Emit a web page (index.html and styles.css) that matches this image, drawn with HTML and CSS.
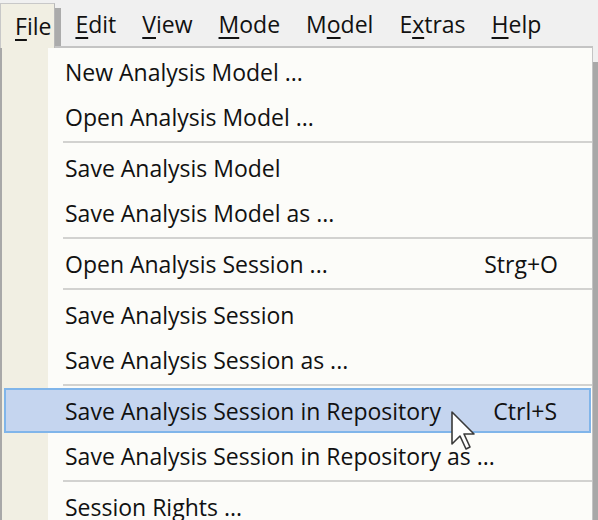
FILE: index.html
```html
<!DOCTYPE html>
<html>
<head>
<meta charset="utf-8">
<link rel="stylesheet" href="styles.css">
</head>
<body>
<div class="menubar">
  <div class="mb-item mb-file"><u>F</u>ile</div>
  <div class="mb-item"><u>E</u>dit</div>
  <div class="mb-item"><u>V</u>iew</div>
  <div class="mb-item"><u>M</u>ode</div>
  <div class="mb-item">M<u>o</u>del</div>
  <div class="mb-item">E<u>x</u>tras</div>
  <div class="mb-item"><u>H</u>elp</div>
</div>
<div class="dropdown">
  <div class="item"><span>New Analysis Model ...</span></div>
  <div class="item"><span>Open Analysis Model ...</span></div>
  <div class="sep"></div>
  <div class="item"><span>Save Analysis Model</span></div>
  <div class="item"><span>Save Analysis Model as ...</span></div>
  <div class="sep"></div>
  <div class="item"><span>Open Analysis Session ...</span><span class="key">Strg+O</span></div>
  <div class="sep"></div>
  <div class="item"><span>Save Analysis Session</span></div>
  <div class="item"><span>Save Analysis Session as ...</span></div>
  <div class="sep"></div>
  <div class="item hover"><span>Save Analysis Session in Repository</span><span class="key">Ctrl+S</span></div>
  <div class="item"><span>Save Analysis Session in Repository as ...</span></div>
  <div class="sep"></div>
  <div class="item"><span>Session Rights ...</span></div>
  <svg class="cursor" width="26" height="42" viewBox="0 0 26 42">
    <path d="M1 1 L1 33 L9 25 L15 38 L19 36 L13 23 L23 23 Z" fill="#fff" stroke="#3a3a3a" stroke-width="1.6" stroke-linejoin="round"/>
  </svg>
</div>
</body>
</html>
```
FILE: styles.css
```css
html, body {
  margin: 0;
  padding: 0;
}
body {
  background: #f0f0f0;
  width: 598px;
  height: 520px;
  overflow: hidden;
  font-family: "Open Sans", "Noto Sans", sans-serif;
  font-size: 23px;
  color: #111;
}
u {
  text-decoration-thickness: 2px;
  text-underline-offset: 4px;
}
.menubar {
  display: flex;
  height: 46px;
  align-items: stretch;
}
.mb-item {
  display: flex;
  align-items: center;
  padding: 0 13px;
  padding-top: 2px;
}
.mb-file {
  position: relative;
  z-index: 2;
  margin-top: 3px;
  margin-bottom: -2px;
  padding: 0 3px 0 14px;
  background: #f1efe3;
  border-left: 1px solid #c8c8c8;
  border-top: 1px solid #c8c8c8;
  border-right: 1px solid #b8b8b8;
  box-sizing: border-box;
  height: 45px;
  margin-right: 7px;
}
.mb-file::after {
  content: "";
  position: absolute;
  top: 4px;
  right: -7px;
  width: 6px;
  bottom: 2px;
  background: #ababab;
}
.dropdown {
  position: relative;
  width: 593px;
  box-sizing: border-box;
  border-top: 2px solid #c4c4c4;
  border-left: 2px solid #a8a8a8;
  border-right: 1px solid #c4c4c4;
  padding-top: 1px;
  background: linear-gradient(to right, #f1efe3 0, #f1efe3 46px, #fcfcf9 46px);
  height: 474px;
}
.dropdown::after {
  content: "";
  position: absolute;
  top: 14px;
  right: -6px;
  width: 5px;
  bottom: 0;
  background: #a8a8a8;
}
.item {
  height: 45px;
  display: flex;
  align-items: center;
  justify-content: space-between;
  padding: 0 34px 0 63px;
  box-sizing: border-box;
  white-space: nowrap;
}
.item.hover {
  margin: 0 1px 0 2px;
  padding: 0 32px 0 59px;
  background: #c5d5ef;
  border: 2px solid #80b5ea;
}
.sep {
  height: 6px;
  margin-left: 61px;
  display: flex;
  align-items: center;
}
.sep::before {
  content: "";
  display: block;
  width: 100%;
  height: 2px;
  background: #d2d2d0;
}
.cursor {
  position: absolute;
  left: 449px;
  top: 363px;
}
```
